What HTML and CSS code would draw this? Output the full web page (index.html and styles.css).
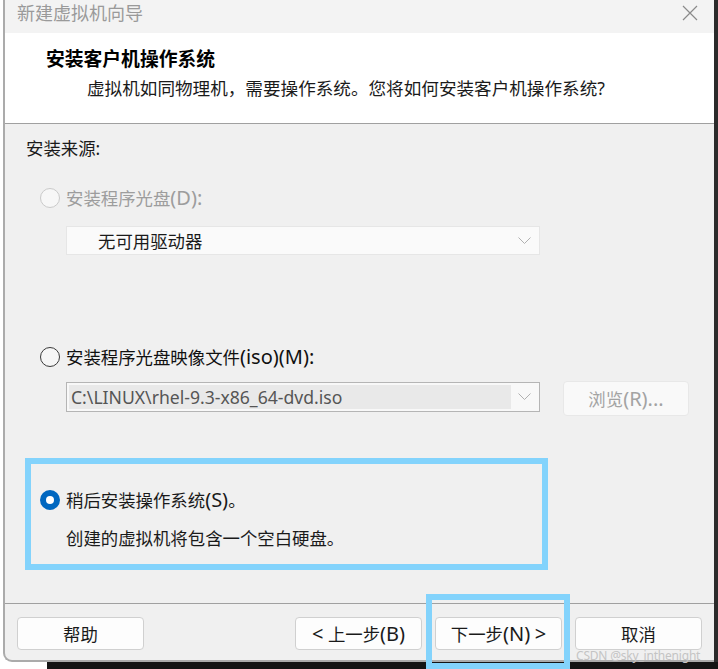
FILE: index.html
```html
<!DOCTYPE html>
<html lang="zh-CN">
<head>
<meta charset="utf-8">
<title>新建虚拟机向导</title>
<link rel="stylesheet" href="styles.css">
</head>
<body>
<div class="page">
  <div class="top-row">
    <div class="dialog">
      <div class="titlebar">
        <span class="title">新建虚拟机向导</span>
        <svg class="close" width="16" height="16" viewBox="0 0 16 16"><path d="M1 1 L15 15 M15 1 L1 15" stroke="#8a8a8a" stroke-width="1.2" fill="none"/></svg>
      </div>
      <div class="header">
        <div class="heading">安装客户机操作系统</div>
        <div class="subtitle">虚拟机如同物理机，需要操作系统。您将如何安装客户机操作系统?</div>
      </div>
      <div class="content">
        <div class="section-label">安装来源:</div>
        <div class="radio-row disabled">
          <span class="radio radio-disabled"></span>
          <span class="label">安装程序光盘<span class="lat">(D):</span></span>
        </div>
        <div class="dropdown dropdown-disabled">
          <span class="dd-text">无可用驱动器</span>
          <svg class="chev" width="13" height="8" viewBox="0 0 13 8"><path d="M0.5 0.5 L6.5 6.5 L12.5 0.5" stroke="#b0b0b0" stroke-width="1" fill="none"/></svg>
        </div>
        <div class="radio-row row-iso">
          <span class="radio radio-off"></span>
          <span class="label">安装程序光盘映像文件<span class="lat">(iso)(M):</span></span>
        </div>
        <div class="combo-row">
          <div class="combo">
            <span class="combo-field">C:\LINUX\rhel-9.3-x86_64-dvd.iso</span>
            <svg class="chev" width="13" height="8" viewBox="0 0 13 8"><path d="M0.5 0.5 L6.5 6.5 L12.5 0.5" stroke="#b0b0b0" stroke-width="1" fill="none"/></svg>
          </div>
          <div class="browse">浏览<span class="lat">(R)...</span></div>
        </div>
        <div class="later-box">
          <div class="radio-row">
            <span class="radio radio-on"></span>
            <span class="label">稍后安装操作系统<span class="lat">(S)</span>。</span>
          </div>
          <div class="later-desc">创建的虚拟机将包含一个空白硬盘。</div>
        </div>
      </div>
      <div class="footer">
        <div class="btn">帮助</div>
        <div class="btn-group">
          <div class="btn"><span class="lat">&lt;</span>&nbsp;上一步<span class="lat">(B)</span></div>
          <div class="btn">下一步<span class="lat">(N)</span>&nbsp;<span class="lat">&gt;</span></div>
          <div class="btn">取消</div>
        </div>
      </div>
    </div>
    <div class="edge"></div>
  </div>
  <div class="bottom-band"></div>
  <div class="next-highlight"></div>
  <div class="watermark">CSDN @sky_inthenight</div>
</div>
</body>
</html>
```
FILE: styles.css
```css
html, body {
  margin: 0;
  padding: 0;
  background: #ffffff;
}
body {
  font-family: "Noto Sans", "Noto Sans CJK SC", sans-serif;
  font-size: 17.4px;
  color: #1a1a1a;
}
.lat {
  font-family: "Noto Sans", sans-serif;
  font-size: 20px;
  line-height: 1;
}
.page {
  position: relative;
  width: 718px;
  height: 669px;
  overflow: hidden;
  display: flex;
  flex-direction: column;
}
.top-row {
  display: flex;
  height: 662px;
}
.dialog {
  flex: 1;
  margin-left: 3px;
  border-left: 2px solid #ababab;
  border-bottom: 2px solid #ababab;
  border-bottom-left-radius: 9px;
  display: flex;
  flex-direction: column;
  overflow: hidden;
  background: #f0f0f0;
}
.edge {
  width: 4px;
  background: #2b2b2b;
}
.bottom-band {
  height: 7px;
  margin-left: 47px;
  background: #141414;
}
.titlebar {
  height: 33px;
  background: #f3f3f3;
  display: flex;
  align-items: flex-start;
  justify-content: space-between;
  padding: 2px 16px 0 12px;
  box-sizing: border-box;
}
.title {
  font-size: 18px;
  line-height: 22px;
  color: #9a9a9a;
}
.close {
  margin-top: 3px;
}
.header {
  box-sizing: border-box;
  height: 91px;
  background: #ffffff;
  border-bottom: 1px solid #a0a0a0;
  padding: 14px 0 0 41px;
}
.heading {
  font-size: 18.8px;
  font-weight: 700;
  line-height: 24px;
  color: #000;
}
.subtitle {
  margin-top: 5px;
  padding-left: 41px;
  font-size: 17.6px;
  line-height: 24px;
  color: #1a1a1a;
}
.content {
  height: 480px;
  box-sizing: border-box;
  border-bottom: 1px solid #a0a0a0;
  padding-top: 12px;
  display: flex;
  flex-direction: column;
  align-items: flex-start;
}
.section-label {
  margin-left: 21px;
  line-height: 24px;
}
.radio-row {
  display: flex;
  align-items: center;
  gap: 6px;
  height: 24px;
  margin-left: 35px;
  margin-top: 26px;
}
.radio-row .label {
  line-height: 24px;
  white-space: nowrap;
}
.radio-row.disabled .label {
  color: #9d9d9d;
}
.radio {
  width: 20px;
  height: 20px;
  border-radius: 50%;
  box-sizing: border-box;
  flex: 0 0 20px;
}
.radio-disabled {
  border: 1px solid #cacaca;
  background: #f7f7f7;
}
.radio-off {
  border: 1.5px solid #3a3a3a;
  background: #f6f6f6;
}
.radio-on {
  background: #0067c0;
  border: 6px solid #0067c0;
  position: relative;
}
.radio-on::after {
  content: "";
  position: absolute;
  left: 0;
  top: 0;
  width: 8px;
  height: 8px;
  border-radius: 50%;
  background: #ffffff;
}
.dropdown {
  margin-left: 61px;
  margin-top: 16px;
  width: 474px;
  height: 29px;
  box-sizing: border-box;
  display: flex;
  align-items: center;
  justify-content: space-between;
  padding: 0 8px 0 31px;
}
.dropdown-disabled {
  background: #fafafa;
  border: 1px solid #e6e6e6;
}
.dd-text {
  line-height: 24px;
}
.row-iso {
  margin-top: 90px;
}
.row-iso .label {
  color: #111;
}
.combo-row {
  display: flex;
  align-items: flex-start;
  gap: 23px;
  margin-left: 61px;
  margin-top: 12px;
}
.combo {
  margin-top: 1px;
  width: 474px;
  height: 30px;
  box-sizing: border-box;
  border: 1px solid #b5b5b5;
  background: #f8f8f8;
  display: flex;
  align-items: center;
  justify-content: space-between;
  padding: 2px 8px 2px 2px;
}
.combo-field {
  flex: 0 0 442px;
  align-self: stretch;
  background: #e9e9e9;
  color: #555555;
  font-size: 17.6px;
  line-height: 24px;
  padding-left: 2px;
  box-sizing: border-box;
  white-space: nowrap;
}
.browse {
  width: 126px;
  height: 35px;
  box-sizing: border-box;
  border: 1px solid #e8e8e8;
  border-radius: 4px;
  background: #f9f9f9;
  color: #a3a3a3;
  display: flex;
  align-items: center;
  justify-content: center;
  white-space: nowrap;
}
.later-box {
  margin-left: 20px;
  margin-top: 42px;
  width: 523px;
  height: 112px;
  box-sizing: border-box;
  border: 6px solid #83d3fc;
  padding: 24px 0 0 9px;
}
.later-box .radio-row {
  margin: 0;
  gap: 6px;
}
.later-desc {
  margin-top: 14px;
  margin-left: 26px;
  line-height: 24px;
}
.footer {
  flex: 1;
  display: flex;
  justify-content: space-between;
  align-items: flex-start;
  padding: 13px 12px 0 12px;
}
.btn-group {
  display: flex;
  gap: 13px;
}
.btn {
  width: 127px;
  height: 33px;
  box-sizing: border-box;
  border: 1px solid #d0d0d0;
  border-radius: 4px;
  background: #fdfdfd;
  display: flex;
  align-items: center;
  justify-content: center;
  color: #1a1a1a;
  white-space: nowrap;
}
.next-highlight {
  position: absolute;
  left: 426px;
  top: 594px;
  width: 144px;
  height: 75px;
  box-sizing: border-box;
  border: 6px solid #83d3fc;
}
.watermark {
  position: absolute;
  left: 576px;
  top: 649px;
  font-family: "Noto Sans", sans-serif;
  font-size: 12px;
  line-height: 14px;
  color: #c4c4c4;
  letter-spacing: -0.2px;
}
```
